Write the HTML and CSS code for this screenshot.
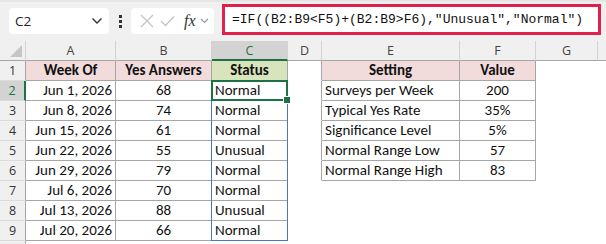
FILE: index.html
```html
<!DOCTYPE html>
<html lang="en">
<head>
    <meta charset="UTF-8">
    <title>Survey Status</title>
    <link rel="stylesheet" href="styles.css">
</head>
<body>
    <div class="toolbar">
        <div class="namebox">
            <span>C2</span>
            <svg width="12" height="8" viewBox="0 0 12 8"><path d="M1.5 1.5 L6 6 L10.5 1.5" fill="none" stroke="#333" stroke-width="1.4"/></svg>
        </div>
        <div class="dots"><i></i><i></i><i></i></div>
        <div class="fxbox">
            <svg width="14" height="14" viewBox="0 0 14 14"><path d="M1 1 L13 13 M13 1 L1 13" stroke="#c4c4c4" stroke-width="1.3"/></svg>
            <svg width="15" height="12" viewBox="0 0 15 12"><path d="M1 6 L5.5 10.5 L14 1.5" fill="none" stroke="#c4c4c4" stroke-width="1.3"/></svg>
            <span class="fx">fx</span>
            <svg width="9" height="6" viewBox="0 0 9 6"><path d="M1 1 L4.5 4.5 L8 1" fill="none" stroke="#999" stroke-width="1.2"/></svg>
        </div>
        <div class="formula">=IF((B2:B9&lt;F5)+(B2:B9&gt;F6),"Unusual","Normal")</div>
    </div>

    <table class="sheet">
        <colgroup>
            <col style="width:26px"><col style="width:90px"><col style="width:96px"><col style="width:76px">
            <col style="width:34px"><col style="width:138px"><col style="width:76px"><col style="width:62px"><col style="width:8px">
        </colgroup>
        <tr class="colhead">
            <th class="corner"><span class="tri"></span></th>
            <th>A</th><th>B</th><th class="sel">C</th><th>D</th><th>E</th><th>F</th><th>G</th><th class="last"></th>
        </tr>
        <tr>
            <th class="rh">1</th>
            <td class="b hd pink">Week Of</td><td class="b hd pink">Yes Answers</td><td class="b hd green">Status</td>
            <td class="gap"></td>
            <td class="b hd pink">Setting</td><td class="b hd pink">Value</td><td></td><td></td>
        </tr>
        <tr>
            <th class="rh selrow">2</th>
            <td class="b r">Jun 1, 2026</td><td class="b c">68</td>
            <td class="b active">Normal<span class="spill"></span><span class="cursor"></span></td>
            <td class="gap"></td>
            <td class="b">Surveys per Week</td><td class="b c">200</td><td></td><td></td>
        </tr>
        <tr>
            <th class="rh">3</th>
            <td class="b r">Jun 8, 2026</td><td class="b c">74</td><td class="b">Normal</td>
            <td class="gap"></td>
            <td class="b">Typical Yes Rate</td><td class="b c">35%</td><td></td><td></td>
        </tr>
        <tr>
            <th class="rh">4</th>
            <td class="b r">Jun 15, 2026</td><td class="b c">61</td><td class="b">Normal</td>
            <td class="gap"></td>
            <td class="b">Significance Level</td><td class="b c">5%</td><td></td><td></td>
        </tr>
        <tr>
            <th class="rh">5</th>
            <td class="b r">Jun 22, 2026</td><td class="b c">55</td><td class="b">Unusual</td>
            <td class="gap"></td>
            <td class="b">Normal Range Low</td><td class="b c">57</td><td></td><td></td>
        </tr>
        <tr>
            <th class="rh">6</th>
            <td class="b r">Jun 29, 2026</td><td class="b c">79</td><td class="b">Normal</td>
            <td class="gap"></td>
            <td class="b">Normal Range High</td><td class="b c">83</td><td></td><td></td>
        </tr>
        <tr>
            <th class="rh">7</th>
            <td class="b r">Jul 6, 2026</td><td class="b c">70</td><td class="b">Normal</td>
            <td></td><td></td><td></td><td></td><td></td>
        </tr>
        <tr>
            <th class="rh">8</th>
            <td class="b r">Jul 13, 2026</td><td class="b c">88</td><td class="b">Unusual</td>
            <td></td><td></td><td></td><td></td><td></td>
        </tr>
        <tr>
            <th class="rh">9</th>
            <td class="b r">Jul 20, 2026</td><td class="b c">66</td><td class="b">Normal</td>
            <td></td><td></td><td></td><td></td><td></td>
        </tr>
        <tr class="stub">
            <th class="rh"></th>
            <td></td><td></td><td></td><td></td><td></td><td></td><td></td><td></td>
        </tr>
    </table>
</body>
</html>
```

FILE: styles.css
```css
*{
    margin: 0;
    padding: 0;
    box-sizing: border-box;
}
body{
    background-color: white;
    font-family: "Carlito", "Lato", "Liberation Sans", sans-serif;
    width: 606px;
    height: 244px;
    overflow: hidden;
}
.toolbar{
    height: 41px;
    background-color: #f0f0f0;
    border-top: 2px solid #e6e6e6;
    display: flex;
    align-items: flex-start;
    padding-left: 9px;
}
.namebox{
    margin-top: 6px;
    width: 100px;
    height: 26px;
    background-color: white;
    border-radius: 4px;
    display: flex;
    align-items: center;
    justify-content: space-between;
    padding: 0 6px 0 6px;
    font-family: "Open Sans", "Liberation Sans", sans-serif;
    font-size: 13.5px;
    color: #222;
}
.dots{
    width: 22px;
    height: 26px;
    margin-top: 6px;
    display: flex;
    flex-direction: column;
    align-items: center;
    justify-content: center;
    gap: 2px;
}
.dots i{
    display: block;
    width: 3px;
    height: 3px;
    background-color: #333;
}
.fxbox{
    margin-top: 6px;
    width: 83px;
    height: 26px;
    background-color: white;
    border-radius: 4px;
    display: flex;
    align-items: center;
    gap: 6px;
    padding-left: 9px;
}
.fx{
    font-family: "Liberation Serif", "DejaVu Serif", serif;
    font-style: italic;
    font-size: 16px;
    color: #333;
    margin-left: 3px;
    margin-right: -2px;
}
.formula{
    margin-left: 8px;
    margin-top: 2px;
    width: 379px;
    height: 31px;
    border: 3px solid #e3204c;
    background-color: white;
    font-family: "Liberation Mono", monospace;
    font-size: 13px;
    color: #111;
    line-height: 25px;
    padding-left: 7px;
    white-space: nowrap;
}
.sheet{
    table-layout: fixed;
    border-collapse: separate;
    border-spacing: 0;
    width: 606px;
    font-size: 15px;
    color: #111;
}
.sheet tr{
    height: 20px;
}
.sheet tr.stub{
    height: 4px;
}
.sheet td,
.sheet th{
    padding: 0 3px;
    white-space: nowrap;
    overflow: visible;
    border-right: 1px solid transparent;
    border-bottom: 1px solid transparent;
    font-weight: normal;
    line-height: 17px;
}
.colhead th{
    background-color: #f0f0f0;
    border-right: 1px solid #d2d2d2;
    border-bottom: 1px solid #a6a6a6;
    font-family: "Open Sans", "Liberation Sans", sans-serif;
    font-size: 12.5px;
    color: #444;
    text-align: center;
}
.colhead th.sel{
    background-color: #d3d3d3;
    color: #1e7145;
    border-bottom: 2px solid #1e7145;
}
.colhead th.last{
    border-right: none;
}
.corner{
    position: relative;
}
.tri{
    position: absolute;
    right: 3px;
    bottom: 3px;
    width: 0;
    height: 0;
    border-left: 12px solid transparent;
    border-bottom: 12px solid #c6c6c6;
}
.sheet th.rh{
    background-color: #f0f0f0;
    border-right: 1px solid #a6a6a6;
    border-bottom: 1px solid #dcdcdc;
    font-family: "Open Sans", "Liberation Sans", sans-serif;
    font-size: 12.5px;
    color: #333;
    text-align: center;
}
.sheet th.selrow{
    background-color: #d3d3d3;
    color: #1e7145;
    border-right: 2px solid #1e7145;
}
.sheet td.b{
    border-right: 1px solid #a6a6a6;
    border-bottom: 1px solid #a6a6a6;
}
.sheet td.gap{
    border-right: 1px solid #a6a6a6;
}
.sheet td.hd{
    font-weight: bold;
    text-align: center;
}
.pink{
    background-color: #f2dcdb;
}
.green{
    background-color: #d8e4bc;
}
.r{
    text-align: right;
}
.c{
    text-align: center;
}
.active{
    position: relative;
}
.spill{
    position: absolute;
    left: -1px;
    top: -1px;
    width: 77px;
    height: 161px;
    border: 1px solid #4a76c6;
}
.cursor{
    position: absolute;
    left: -1px;
    top: -1px;
    width: 77px;
    height: 21px;
    border: 2px solid #1e7145;
}
.cursor::after{
    content: "";
    position: absolute;
    right: -5px;
    bottom: -5px;
    width: 6px;
    height: 6px;
    background-color: #1e7145;
    border: 1px solid white;
}
```
